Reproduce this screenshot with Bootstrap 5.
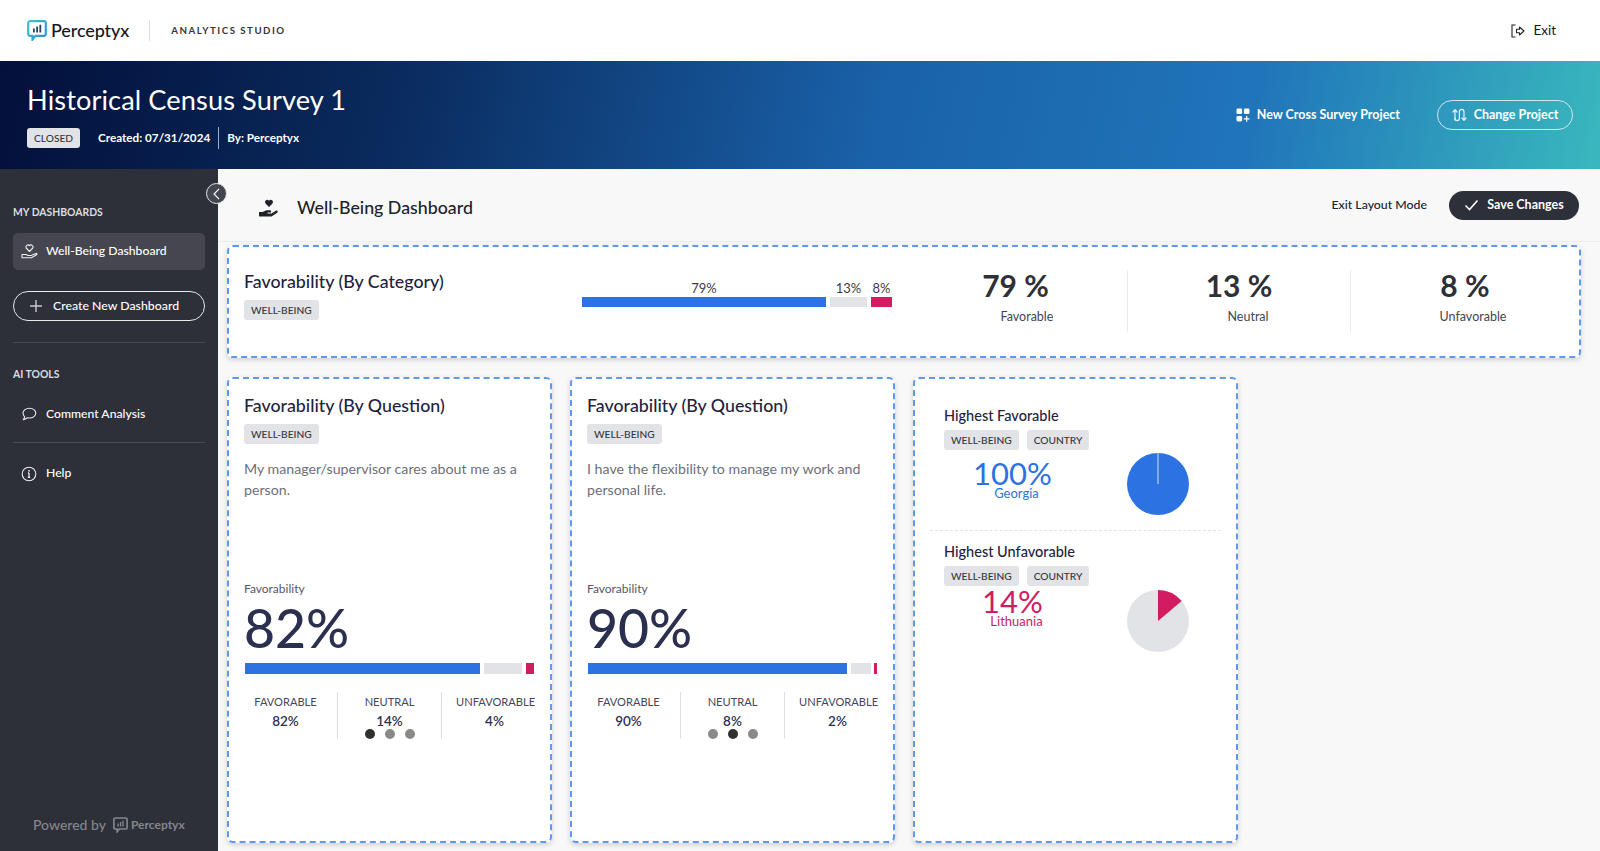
<!DOCTYPE html>
<html lang="en">
<head>
<meta charset="utf-8">
<title>Analytics Studio</title>
<link href="https://cdn.jsdelivr.net/npm/bootstrap@5.3.0/dist/css/bootstrap.min.css" rel="stylesheet">
<style>
html,body{height:851px;overflow:hidden}
body{font-family:"Lato","Liberation Sans",sans-serif;color:#1f2340;background:#f8f8f8}
.page-wrap{height:851px;width:1600px}
.body-row{min-height:0}
.topbar{height:61px;padding:0 44px 0 27px;background:#fff}
.brand-name{font-size:18px;font-weight:500;color:#15171f;margin-left:4px;letter-spacing:-.1px}
.brand-sep{width:1px;height:21px;background:#dcdde0;margin:0 21px 0 20px}
.brand-sub{font-size:9.7px;font-weight:700;letter-spacing:1.5px;color:#33363f}
.exit-link{font-size:13.5px;color:#15171f;gap:8px}
.hero{height:108px;padding:0 27px;background:linear-gradient(102deg,#03103a 0%,#0a2b5e 25%,#1a62aa 55%,#2075ba 78%,#3ab8be 100%);color:#fff}
.hero-title{font-size:27.2px;font-weight:400;line-height:34px;margin:1px 0 10px;letter-spacing:.1px}
.tag-chip{display:inline-block;background:#e2e3e6;color:#33363f;font-size:10.2px;font-weight:500;line-height:20px;height:20px;padding:0 7px;border-radius:3px}
.hero-meta{font-size:11.7px;font-weight:700}
.hero-sep{width:1px;height:22px;background:#9fb1c9;margin:0 8px}
.hero-act{font-size:12.5px;font-weight:700;color:#fff;gap:7px;border:0;padding:0}
.hero-pill{width:136px;height:30px;margin-left:37px;border:1px solid #d4e4f2;color:#fff;font-size:12.5px;font-weight:700;padding:0;gap:7px}
.side{width:218px;flex:0 0 218px;background:#2d2f39;color:#fff;padding:0 13px}
.side-head{font-size:10.4px;font-weight:700;color:#dcdde0;line-height:14px}
.side-item{height:37px;font-size:12.2px;font-weight:500;gap:9px;padding-left:7px;color:#fff;border-radius:5px;white-space:nowrap}
.side-item.on{background:#45464f}
.side-new{height:30px;border:1.5px solid #e9e9ea;color:#fff;font-size:12.3px;font-weight:500;gap:10px;padding:0 0 0 15px;white-space:nowrap}
.side-rule{height:1px;background:#4a4c55}
.powered{font-size:14px;color:#84868c;padding-left:20px;margin-bottom:16px;gap:7px;font-weight:500;white-space:nowrap}
.powered-name{font-size:12px;font-weight:700;margin-left:-4px}
.collapse-dot{position:absolute;left:206px;top:183px;width:21px;height:21px;border-radius:50%;background:#44464f;border:1px solid #e8e8ea;z-index:3}
.dash-head{height:73px;padding:0 21px 0 40px;border-bottom:1px solid #ececee;background:#f8f8f8}
.dash-icon{margin-top:5px}
.dash-title{font-size:17.8px;font-weight:500;color:#20222b;margin:5px 0 0 18px}
.exit-mode{font-size:12.3px;font-weight:500;color:#20222b;margin-right:22px}
.save-btn{width:130px;height:29px;background:#2d2f39;color:#fff;font-size:12.5px;font-weight:700;gap:8px;padding:0}
.canvas{padding:3px 19px 0 9px}
.tile{background:#fff;border:2px dashed #5f98f2;border-radius:6px;box-shadow:0 2px 5px rgba(40,50,70,.2)}
.tile-wide{height:113px;margin-bottom:19px;padding:23px 10px 0 15px}
.tile-grid{display:grid;grid-template-columns:repeat(4,1fr);gap:18px}
.tile-tall{height:466px;padding:15px 15px 0 15px}
.tile-h{font-size:17.8px;font-weight:500;line-height:22px;color:#1f2340;margin:0 0 4px}
.wide-left{width:339px}
.wide-bar{width:310px;padding-top:10px}
.seg-labels{font-size:13px;line-height:16px;color:#3b3d46;font-weight:400}
.seg-bar{gap:4px}
.seg{height:10px}
.c-blue{background:#2d72e2}
.c-grey{background:#e2e3e6}
.c-pink{background:#d21b60}
.wide-stats{flex:1;margin-left:17px}
.stat-cell{height:62px;text-align:center}
.stat-big{font-size:30px;font-weight:700;color:#2e3038;line-height:30px}
.stat-sub{font-size:12.5px;color:#44464f;line-height:16px;margin-top:9px;padding-left:18px}
.stat-cell.tail .stat-big{padding-left:10px}
.stat-cell.tail .stat-sub{padding-left:26px}
.stat-rule{border-left:1px solid #ebebed}
.q-text{font-size:14.2px;line-height:21px;color:#6d6f7a;margin:14px 0 0;height:123px}
.fav-label{font-size:12px;color:#55576a;line-height:16px}
.fav-num{font-size:53.5px;font-weight:500;line-height:60px;color:#2c3050}
.q-bar{height:11px;gap:4px;margin:6px 0 0 1px;width:289px}
.q-bar .seg{height:11px}
.q-stats{margin-top:18px}
.q-cell{height:47px;text-align:center;padding-top:2px;white-space:nowrap}
.q-first{width:93px;padding-right:10px}
.q-mid{width:104px}
.q-last{width:92px;padding-left:14px}
.q-lab{font-size:11.1px;line-height:16px;color:#44465a}
.q-val{font-size:13.5px;font-weight:600;line-height:16px;color:#2c3050;margin-top:3px}
.dots{gap:10px}
.dot-i{width:10px;height:10px;border-radius:50%;background:#888a88}
.dot-i.cur{background:#2f302f}
.q-sep{border-left:1px solid #dfe0e3}
.hi-wrap{padding:28px 15px 0 15px}
.hi-row{height:123px;padding-left:14px}
.hi-row+.hi-row{border-top:1px dashed #e2e3e6;padding-top:12px}
.hi-title{font-size:14.5px;font-weight:500;line-height:18px;color:#1f2340;margin-bottom:5px}
.hi-num{font-size:31px;line-height:30px;text-align:center;font-weight:400;width:137px}
.hi-name{font-size:13px;line-height:13px;text-align:center;width:145px;margin-top:-1px}
.pie-a{margin:46px 32px 0 0}
.pie-b{margin:47px 32px 0 0}
.t-blue{color:#2d72e2}
.t-pink{color:#d21b60}
</style>
</head>
<body>
<div class="page-wrap d-flex flex-column position-relative">
  <div class="topbar d-flex align-items-center justify-content-between">
    <div class="d-flex align-items-center">
      <svg width="20" height="21" viewBox="0 0 20 21"><defs><linearGradient id="lg" x1="0" y1="0" x2="1" y2="1"><stop offset="0" stop-color="#3fc4c4"/><stop offset="1" stop-color="#2b8fd8"/></linearGradient></defs><path d="M3 1.200h14a1.800 1.800 0 0 1 1.800 1.800v11a1.800 1.800 0 0 1-1.800 1.800H8.500L5.500 19.500v-3.700H3A1.800 1.800 0 0 1 1.200 14V3A1.800 1.800 0 0 1 3 1.200z" fill="none" stroke="url(#lg)" stroke-width="2.200"/><path d="M6 8.500h1.800v4H6zM9.200 6.500H11v6H9.200zM12.400 4.800h1.800v7.700h-1.800z" fill="#27485f"/></svg>
      <span class="brand-name">Perceptyx</span>
      <span class="brand-sep"></span>
      <span class="brand-sub">ANALYTICS STUDIO</span>
    </div>
    <div class="exit-link d-flex align-items-center">
      <svg width="14" height="14" viewBox="0 0 14 14" fill="none" stroke="#20222b" stroke-width="1.100"><path d="M4.500 1H1v12h3.500"/><path d="M5.500 5.300h3V3l4.500 4-4.500 4V8.700h-3z" stroke-linejoin="round"/></svg>
      <span>Exit</span>
    </div>
  </div>

  <div class="hero d-flex align-items-center justify-content-between">
    <div>
      <h1 class="hero-title">Historical Census Survey 1</h1>
      <div class="d-flex align-items-center">
        <span class="tag-chip" style="margin-right:18px">CLOSED</span>
        <span class="hero-meta">Created: 07/31/2024</span>
        <span class="hero-sep"></span>
        <span class="hero-meta">By: Perceptyx</span>
      </div>
    </div>
    <div class="d-flex align-items-center">
      <button class="btn hero-act d-flex align-items-center">
        <svg width="14" height="14" viewBox="0 0 14 14" fill="#fff"><rect x="0.500" y="0.500" width="5.600" height="5.600" rx="1.400"/><rect x="7.900" y="0.500" width="5.600" height="5.600" rx="1.400"/><rect x="0.500" y="7.900" width="5.600" height="5.600" rx="1.400"/><path d="M10 8h1.300v2.200h2.200v1.300h-2.200v2.200H10v-2.200H7.800v-1.300H10z"/></svg>
        New Cross Survey Project
      </button>
      <button class="btn hero-pill rounded-pill d-flex align-items-center justify-content-center">
        <svg width="15" height="14" viewBox="0 0 15 14" fill="none" stroke="#e8f1f8" stroke-width="1.200" stroke-linecap="round" stroke-linejoin="round"><path d="M3 12V2M1 4l2-2.400L5 4"/><path d="M3 10c0 2 1 2.600 2.200 2.600S7.400 12 7.400 10V4c0-2 1-2.600 2.200-2.600S12 2 12 4v8.400M10 10l2 2.400 2-2.400"/></svg>
        Change Project
      </button>
    </div>
  </div>

  <div class="body-row d-flex flex-grow-1">
    <aside class="side d-flex flex-column">
      <div class="side-head" style="margin-top:36px">MY DASHBOARDS</div>
      <div class="side-item on d-flex align-items-center" style="margin-top:14px;gap:7px">
        <svg width="19" height="19" viewBox="0 0 19 19" fill="none" stroke="#eee" stroke-width="1.100" stroke-linejoin="round" stroke-linecap="round"><path d="M9.500 9.500 6.200 6a2.100 2.100 0 0 1 3.300-2.500A2.100 2.100 0 0 1 12.800 6z"/><path d="M2 12.500h4l2 1h3l5-2c.9-.3 1.300.8.500 1.300l-5 3H2z"/></svg>
        <span>Well-Being Dashboard</span>
      </div>
      <button class="btn side-new rounded-pill d-flex align-items-center" style="margin-top:21px">
        <svg width="14" height="14" viewBox="0 0 14 14" stroke="#c9cacd" stroke-width="1.400"><path d="M7 1v12M1 7h12"/></svg>
        Create New Dashboard
      </button>
      <div class="side-rule" style="margin-top:21px"></div>
      <div class="side-head" style="margin-top:24px">AI TOOLS</div>
      <div class="side-item d-flex align-items-center" style="margin-top:15px;padding-left:8px">
        <svg width="16" height="15" viewBox="0 0 16 15" fill="none" stroke="#eee" stroke-width="1.100" stroke-linejoin="round"><path d="M8.500 1.200c3.500 0 6.300 2.100 6.300 4.900s-2.800 4.900-6.300 4.900c-.8 0-1.500-.1-2.200-.3-1 1.100-2.400 1.800-4 2 .7-.8 1.200-1.700 1.300-2.900C2.600 8.900 2 7.600 2 6.100 2 3.300 5 1.200 8.500 1.200z"/></svg>
        <span>Comment Analysis</span>
      </div>
      <div class="side-rule" style="margin-top:9px"></div>
      <div class="side-item d-flex align-items-center" style="margin-top:12px;padding-left:8px">
        <svg width="16" height="16" viewBox="0 0 16 16" fill="none" stroke="#eee" stroke-width="1.100"><circle cx="8" cy="8" r="6.800"/><path d="M8 7v4.200M6.800 11.300h2.400M6.900 7H8" stroke-width="1.300"/><circle cx="8" cy="4.800" r=".9" fill="#eee" stroke="none"/></svg>
        <span>Help</span>
      </div>
      <div class="powered d-flex align-items-center mt-auto">
        <span>Powered by</span>
        <svg width="15" height="16" viewBox="0 0 20 21"><path d="M3 1.200h14a1.800 1.800 0 0 1 1.800 1.800v11a1.800 1.800 0 0 1-1.800 1.800H8.500L5.500 19.500v-3.700H3A1.800 1.800 0 0 1 1.200 14V3A1.800 1.800 0 0 1 3 1.200z" fill="none" stroke="#84868c" stroke-width="2.200"/><path d="M6 8.500h1.800v4H6zM9.200 6.500H11v6H9.200zM12.400 4.800h1.800v7.700h-1.800z" fill="#84868c"/></svg>
        <span class="powered-name">Perceptyx</span>
      </div>
    </aside>

    <button class="collapse-dot p-0 d-flex align-items-center justify-content-center" aria-label="Collapse">
      <svg width="9" height="12" viewBox="0 0 9 12" fill="none" stroke="#fff" stroke-width="1.100"><path d="M7 1 2 6l5 5"/></svg>
    </button>

    <main class="flex-grow-1" style="min-width:0">
      <div class="dash-head d-flex align-items-center">
        <svg class="dash-icon" width="21" height="20" viewBox="0 0 21 20" fill="#20222b"><path d="M11 9 7.500 5.400a2.200 2.200 0 0 1 3.500-2.700 2.200 2.200 0 0 1 3.500 2.700z"/><path d="M1 14h3.500l4-1.800h3.500a1 1 0 0 1 0 2.400H9.500v.8h4l4.700-2.800c1.300-.4 2.100 1.300 1 2.100L13.500 18.500H1z"/></svg>
        <span class="dash-title">Well-Being Dashboard</span>
        <span class="exit-mode ms-auto">Exit Layout Mode</span>
        <button class="btn save-btn rounded-pill d-flex align-items-center justify-content-center">
          <svg width="15" height="12" viewBox="0 0 15 12" fill="none" stroke="#fff" stroke-width="1.600"><path d="M1.500 6.500 5.500 10.500 13.500 1.500"/></svg>
          Save Changes
        </button>
      </div>

      <div class="canvas">
        <section class="tile tile-wide d-flex">
          <div class="wide-left">
            <h2 class="tile-h">Favorability (By Category)</h2>
            <span class="tag-chip">WELL-BEING</span>
          </div>
          <div class="wide-bar">
            <div class="seg-labels d-flex seg-bar">
              <span class="text-center" style="width:244px">79%</span>
              <span class="text-center" style="width:37px">13%</span>
              <span class="text-center" style="width:21px">8%</span>
            </div>
            <div class="d-flex seg-bar" style="margin-top:1px">
              <div class="seg c-blue" style="width:244px"></div>
              <div class="seg c-grey" style="width:37px"></div>
              <div class="seg c-pink" style="width:21px"></div>
            </div>
          </div>
          <div class="wide-stats d-flex">
            <div class="stat-cell flex-fill" style="width:218px"><div class="stat-big" style="padding-right:5px">79 %</div><div class="stat-sub">Favorable</div></div>
            <div class="stat-cell flex-fill stat-rule" style="width:223px"><div class="stat-big">13 %</div><div class="stat-sub">Neutral</div></div>
            <div class="stat-cell flex-fill stat-rule tail" style="width:219px"><div class="stat-big">8 %</div><div class="stat-sub">Unfavorable</div></div>
          </div>
        </section>

        <div class="tile-grid">
          <section class="tile tile-tall">
            <h2 class="tile-h">Favorability (By Question)</h2>
            <span class="tag-chip">WELL-BEING</span>
            <p class="q-text">My manager/supervisor cares about me as a person.</p>
            <div class="fav-label">Favorability</div>
            <div class="fav-num">82%</div>
            <div class="q-bar d-flex">
              <div class="seg c-blue" style="width:235px"></div>
              <div class="seg c-grey" style="width:38px"></div>
              <div class="seg c-pink" style="width:8px"></div>
            </div>
            <div class="q-stats d-flex">
              <div class="q-cell q-first"><div class="q-lab">FAVORABLE</div><div class="q-val">82%</div></div>
              <div class="q-cell q-mid q-sep"><div class="q-lab">NEUTRAL</div><div class="q-val">14%</div>
                <div class="dots d-flex justify-content-center"><span class="dot-i cur"></span><span class="dot-i"></span><span class="dot-i"></span></div></div>
              <div class="q-cell q-last q-sep"><div class="q-lab">UNFAVORABLE</div><div class="q-val">4%</div></div>
            </div>
          </section>

          <section class="tile tile-tall">
            <h2 class="tile-h">Favorability (By Question)</h2>
            <span class="tag-chip">WELL-BEING</span>
            <p class="q-text">I have the flexibility to manage my work and personal life.</p>
            <div class="fav-label">Favorability</div>
            <div class="fav-num">90%</div>
            <div class="q-bar d-flex">
              <div class="seg c-blue" style="width:259px"></div>
              <div class="seg c-grey" style="width:20px"></div>
              <div class="seg c-pink" style="width:3px;margin-left:-1px"></div>
            </div>
            <div class="q-stats d-flex">
              <div class="q-cell q-first"><div class="q-lab">FAVORABLE</div><div class="q-val">90%</div></div>
              <div class="q-cell q-mid q-sep"><div class="q-lab">NEUTRAL</div><div class="q-val">8%</div>
                <div class="dots d-flex justify-content-center"><span class="dot-i"></span><span class="dot-i cur"></span><span class="dot-i"></span></div></div>
              <div class="q-cell q-last q-sep"><div class="q-lab">UNFAVORABLE</div><div class="q-val">2%</div></div>
            </div>
          </section>

          <section class="tile tile-tall hi-wrap">
            <div class="hi-row d-flex justify-content-between">
              <div>
                <div class="hi-title">Highest Favorable</div>
                <div class="d-flex gap-2"><span class="tag-chip">WELL-BEING</span><span class="tag-chip">COUNTRY</span></div>
                <div class="hi-num t-blue" style="margin-top:8px">100%</div>
                <div class="hi-name t-blue">Georgia</div>
              </div>
              <svg class="flex-shrink-0 pie-a" width="62" height="62" viewBox="0 0 62 62"><circle cx="31" cy="31" r="31" fill="#2d72e2"/><path d="M31 0v31" stroke="#fff" stroke-width=".8"/></svg>
            </div>
            <div class="hi-row d-flex justify-content-between">
              <div>
                <div class="hi-title">Highest Unfavorable</div>
                <div class="d-flex gap-2"><span class="tag-chip">WELL-BEING</span><span class="tag-chip">COUNTRY</span></div>
                <div class="hi-num t-pink">14%</div>
                <div class="hi-name t-pink">Lithuania</div>
              </div>
              <svg class="flex-shrink-0 pie-b" width="62" height="62" viewBox="0 0 62 62"><circle cx="31" cy="31" r="31" fill="#e2e3e6"/><path d="M31 31V0A31 31 0 0 1 54.700 11.100z" fill="#d21b60"/></svg>
            </div>
          </section>
        </div>
      </div>
    </main>
  </div>
</div>
<script src="https://cdn.jsdelivr.net/npm/bootstrap@5.3.0/dist/js/bootstrap.bundle.min.js"></script>
</body>
</html>
